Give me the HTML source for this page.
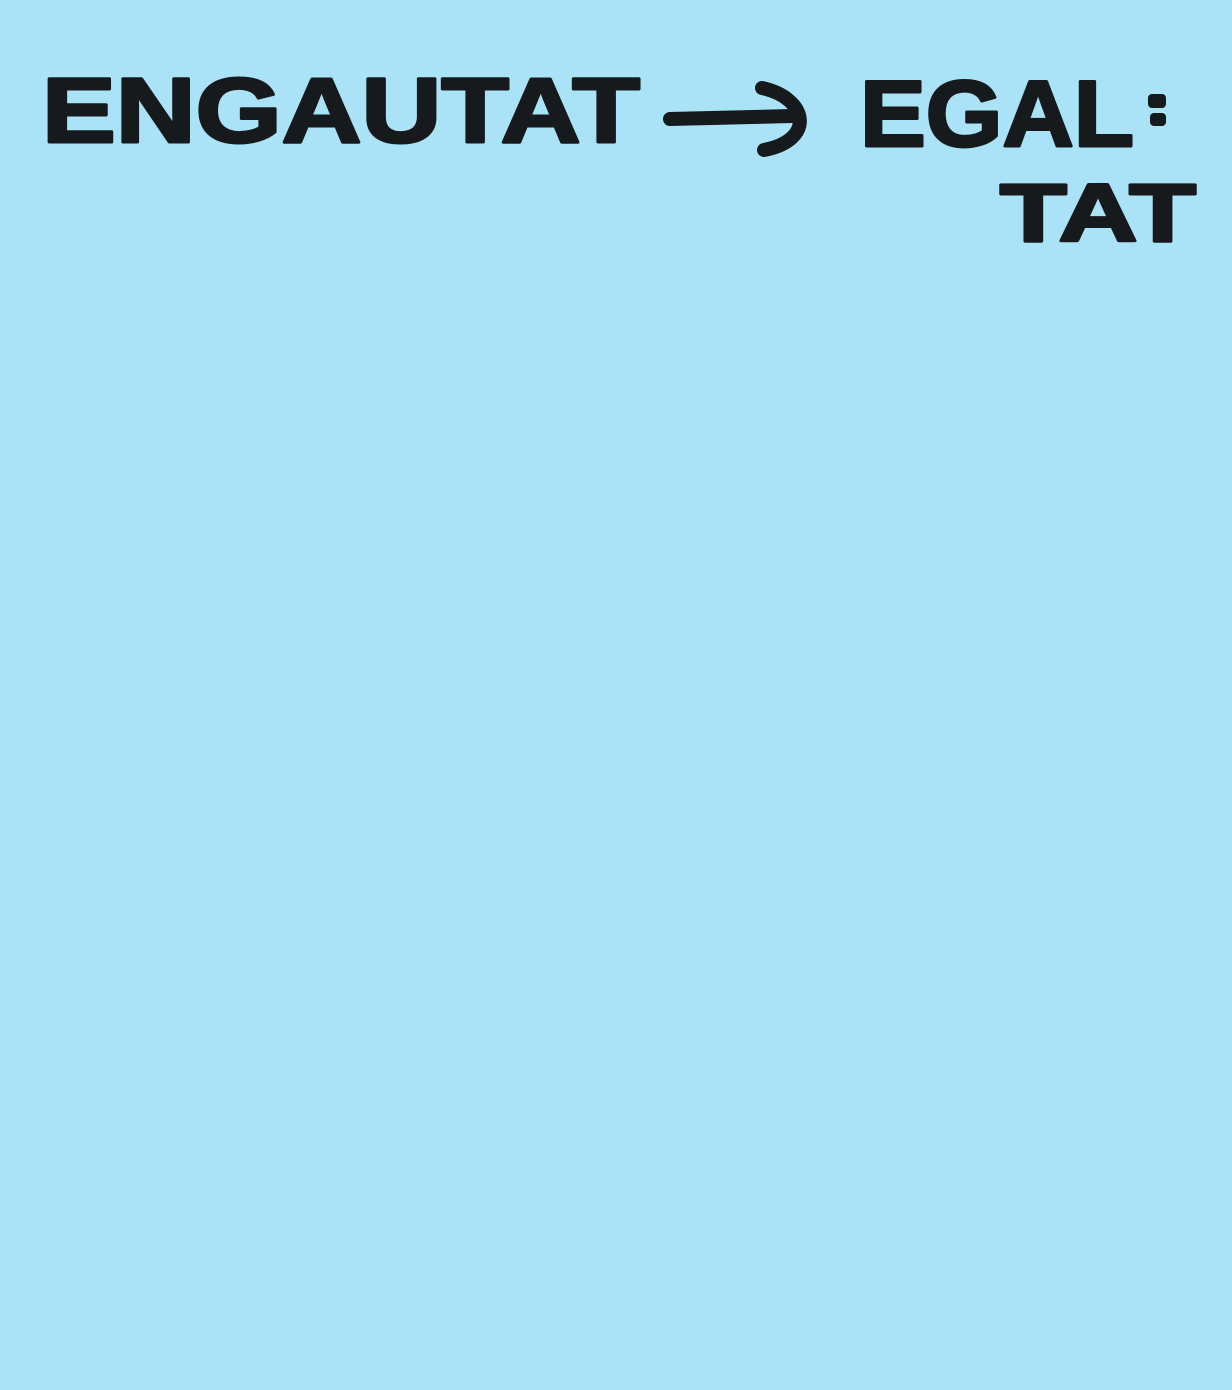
<!DOCTYPE html>
<html><head><meta charset="utf-8"><style>
html,body{margin:0;padding:0;background:#aae3f8;}
svg{display:block}
text{font-family:"Liberation Sans",sans-serif;font-weight:bold;fill:#161a1c;stroke:#161a1c;stroke-width:3;stroke-linejoin:round;}
</style></head><body>
<svg width="1232" height="1390" viewBox="0 0 1232 1390" xmlns="http://www.w3.org/2000/svg">
<rect width="1232" height="1390" fill="#aae3f8"/>
<text x="42" y="142" font-size="92" textLength="598" lengthAdjust="spacingAndGlyphs">ENGAUTAT</text>
<path d="M670 119 L792 116 M762 88 C808 98 816 140 764 150" stroke="#161a1c" stroke-width="14" fill="none" stroke-linecap="round"/>
<text x="860" y="146" font-size="94" textLength="274" lengthAdjust="spacingAndGlyphs">EGAL</text>
<rect x="1148" y="94" width="18" height="14" rx="4" fill="#161a1c"/>
<rect x="1150" y="113" width="16" height="13" rx="4" fill="#161a1c"/>
<text x="1000" y="241" font-size="82" textLength="196" lengthAdjust="spacingAndGlyphs">TAT</text>
</svg>
</body></html>
